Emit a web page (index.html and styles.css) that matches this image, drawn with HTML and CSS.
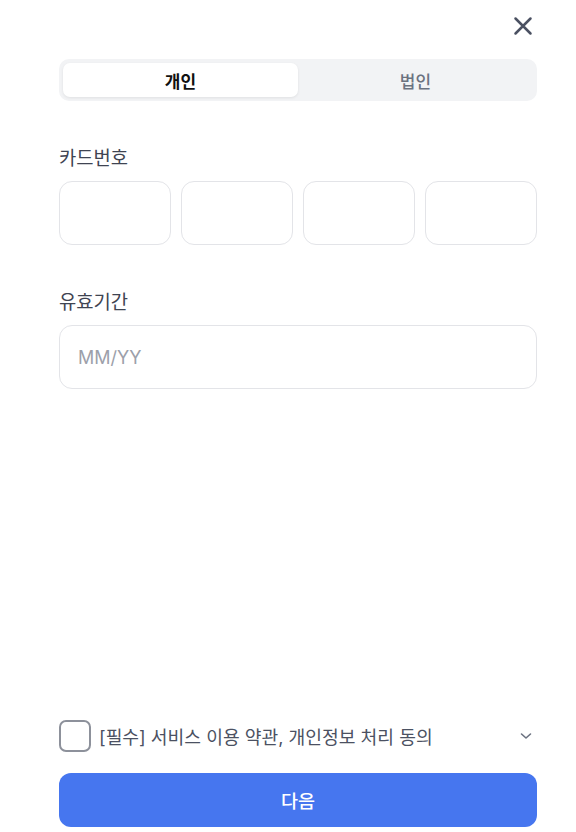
FILE: index.html
```html
<!DOCTYPE html>
<html lang="ko">
<head>
    <meta charset="UTF-8">
    <meta name="viewport" content="width=device-width, initial-scale=1.0">
    <title>카드 등록</title>
    <link rel="stylesheet" href="styles.css">
</head>
<body>
    <div class="sheet">
        <div class="top">
            <button class="close" aria-label="닫기">
                <svg width="24" height="24" viewBox="0 0 24 24" fill="none" stroke="#4b5162" stroke-width="2.5" stroke-linecap="round">
                    <path d="M4.5 4.5L19.5 19.5M19.5 4.5L4.5 19.5"/>
                </svg>
            </button>
        </div>

        <div class="segment">
            <button class="tab active">개인</button>
            <button class="tab">법인</button>
        </div>

        <div class="field">
            <label class="label">카드번호</label>
            <div class="card-row">
                <input class="box" type="text" maxlength="4">
                <input class="box" type="text" maxlength="4">
                <input class="box" type="password" maxlength="4">
                <input class="box" type="password" maxlength="4">
            </div>
        </div>

        <div class="field">
            <label class="label">유효기간</label>
            <input class="box wide" type="text" placeholder="MM/YY">
        </div>

        <div class="spacer"></div>

        <div class="agree">
            <span class="check"></span>
            <span class="agree-text">[필수] 서비스 이용 약관, 개인정보 처리 동의</span>
            <svg class="chev" width="12" height="8" viewBox="0 0 12 8" fill="none" stroke="#6b7280" stroke-width="1.6" stroke-linecap="round" stroke-linejoin="round">
                <path d="M1.5 2L6 6L10.5 2"/>
            </svg>
        </div>

        <button class="next">다음</button>
    </div>
</body>
</html>
```

FILE: styles.css
```css
* {
    box-sizing: border-box;
}

body {
    margin: 0;
    background-color: #fff;
    font-family: Inter, "Noto Sans CJK KR", sans-serif;
    color: #111827;
}

.sheet {
    height: 832px;
    display: flex;
    flex-direction: column;
    padding: 0 39px 5px 59px;
}

.top {
    height: 59px;
    display: flex;
    justify-content: flex-end;
    align-items: flex-start;
}

.close {
    margin: 14px 2px 0 0;
    padding: 0;
    width: 24px;
    height: 24px;
    border: none;
    background: none;
    cursor: pointer;
}

.close svg {
    display: block;
}

.segment {
    height: 42px;
    display: flex;
    padding: 4px;
    background-color: #f2f3f5;
    border-radius: 10px;
}

.tab {
    flex: 1;
    border: none;
    background: none;
    border-radius: 7px;
    font-family: inherit;
    font-size: 17px;
    font-weight: 500;
    color: #6b7280;
    cursor: pointer;
}

.tab.active {
    background-color: #fff;
    color: #111;
    font-weight: 700;
    box-shadow: 0 1px 3px rgba(0, 0, 0, 0.08);
}

.field {
    margin-top: 46px;
}

.label {
    display: block;
    font-size: 18.8px;
    line-height: 24px;
    color: #3f4452;
    margin-bottom: 10px;
}

.card-row {
    display: flex;
    gap: 10px;
}

.box {
    flex: 1;
    min-width: 0;
    height: 64px;
    border: 1px solid #e3e4e8;
    border-radius: 13px;
    padding: 0 18px;
    font-family: inherit;
    font-size: 18px;
    color: #111;
    outline: none;
}

.box.wide {
    display: block;
    width: 100%;
}

.box::placeholder {
    color: #9ca0aa;
}

.spacer {
    flex: 1;
}

.agree {
    display: flex;
    align-items: center;
    height: 32px;
}

.check {
    width: 32px;
    height: 32px;
    border: 2px solid #8d919b;
    border-radius: 7px;
    flex-shrink: 0;
}

.agree-text {
    flex: 1;
    margin-left: 8px;
    font-size: 18.2px;
    color: #4b5162;
}

.chev {
    margin-right: 5px;
}

.next {
    margin-top: 21px;
    height: 54px;
    border: none;
    border-radius: 12px;
    background-color: #4676ef;
    color: #fff;
    font-family: inherit;
    font-size: 18.5px;
    font-weight: 500;
    cursor: pointer;
}
```
